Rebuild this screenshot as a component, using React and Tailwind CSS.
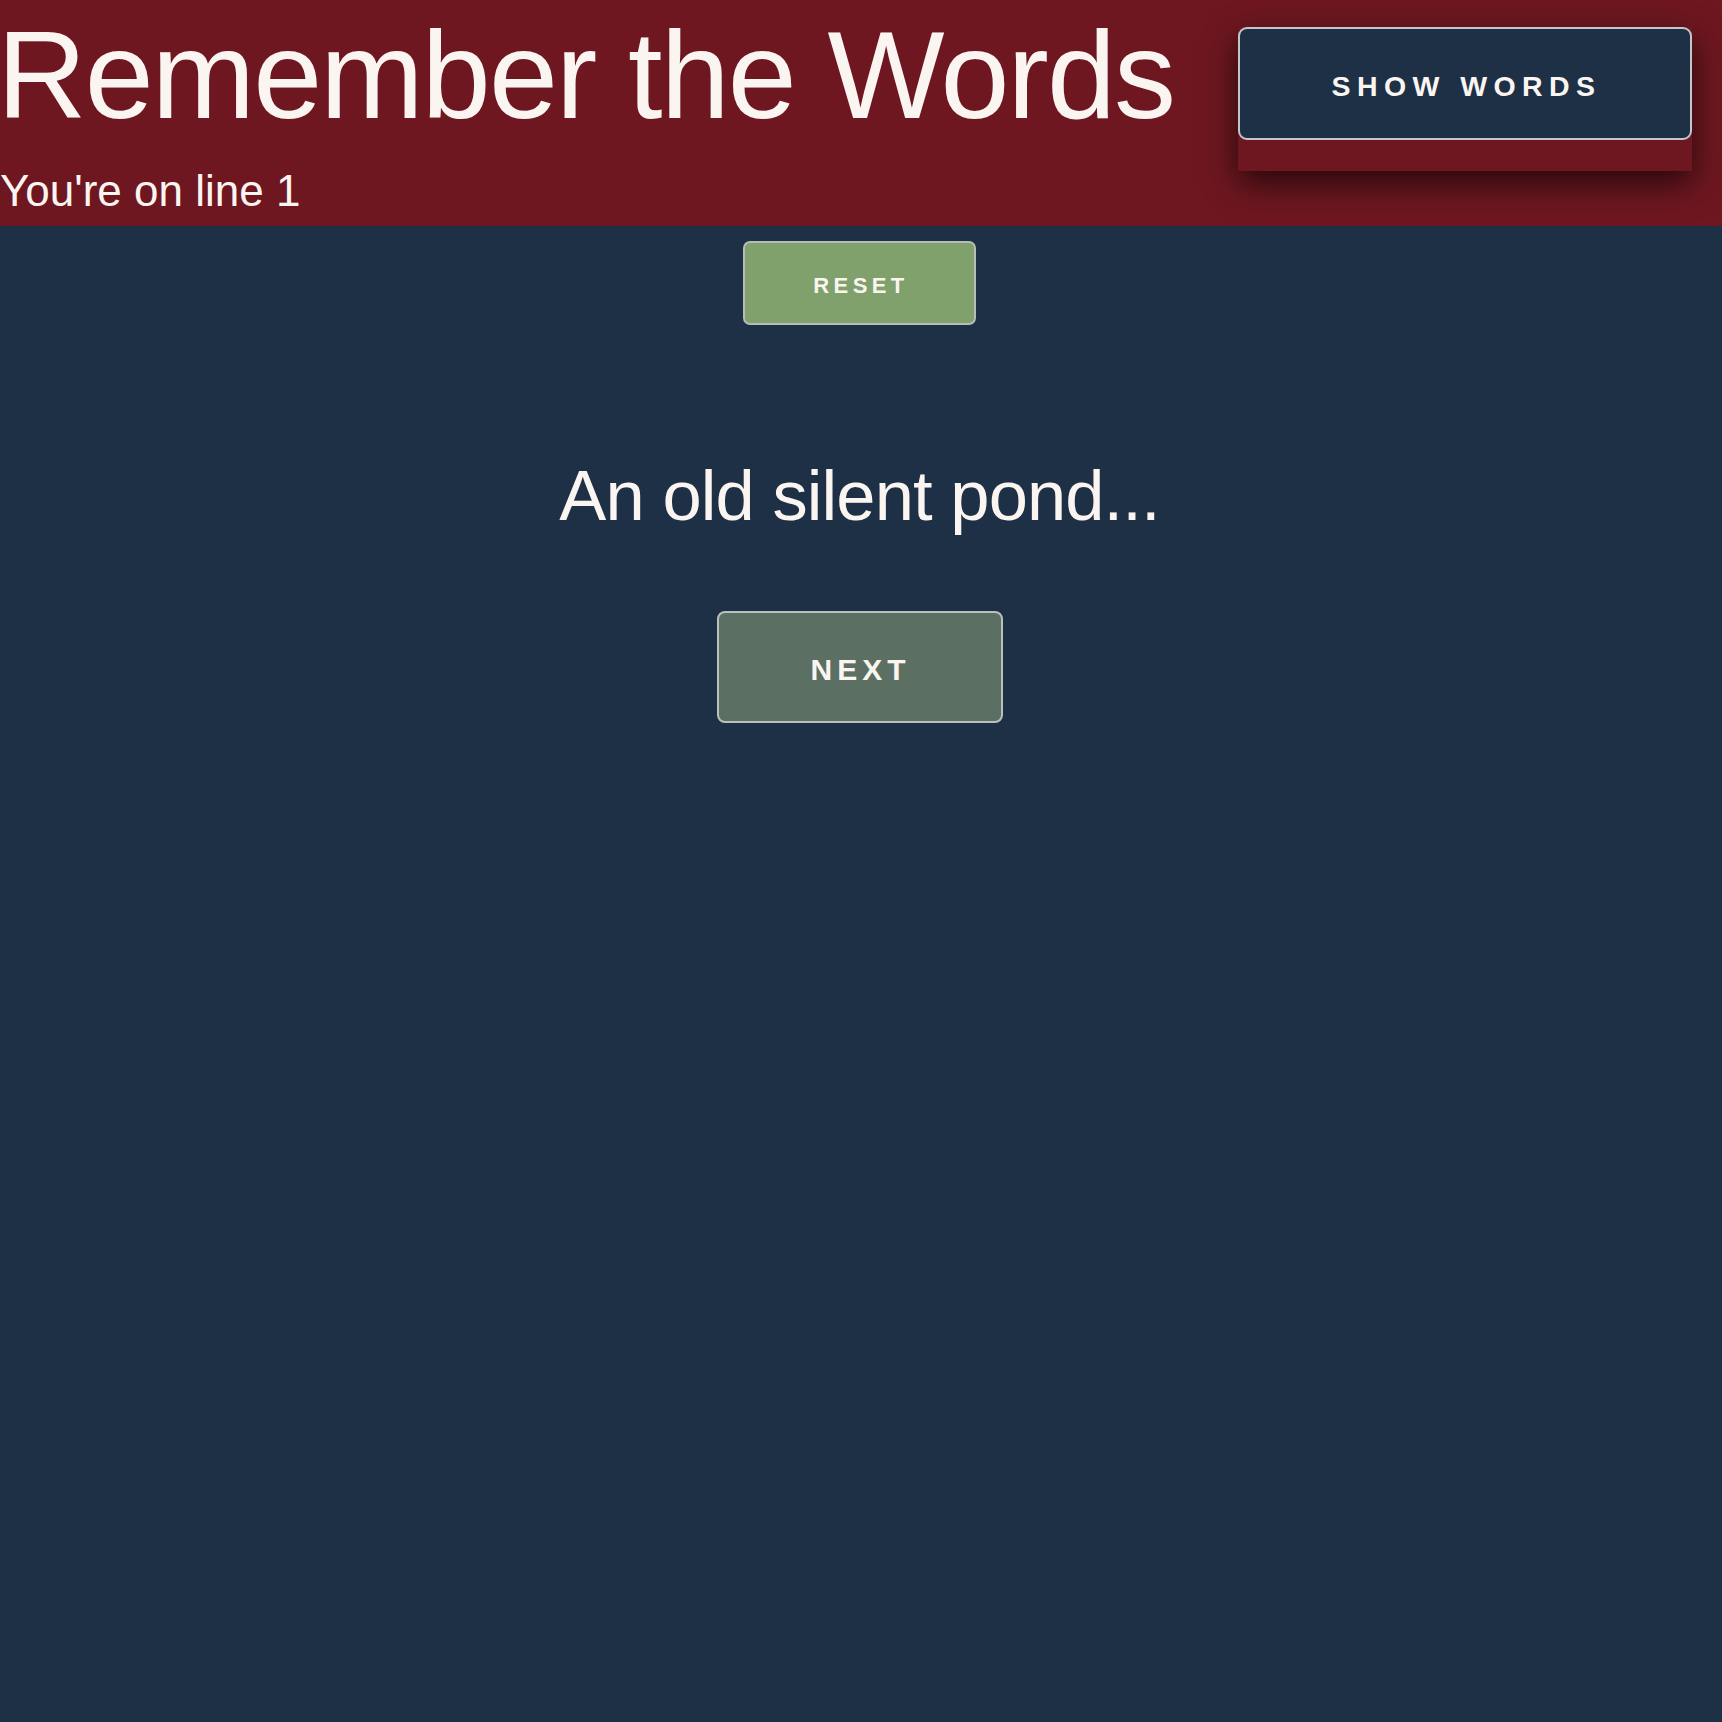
export default function App() {
  return (
    <div className="min-h-screen bg-[#1d3045] font-['Liberation_Sans',Arial,sans-serif] text-[#fbf5f2]">
      <header className="flex h-[226px] items-start justify-between bg-[#6e1720]">
        <div className="flex flex-col pt-[6px]">
          <h1 className="-ml-[3px] m-0 whitespace-nowrap text-[124px] font-normal leading-[139px] tracking-[-1.85px]">
            Remember the Words
          </h1>
          <p className="mt-[21px] whitespace-nowrap text-[44px] leading-[49px]">You're on line 1</p>
        </div>
        <div className="mr-[30px] mt-[27px] w-[454px] bg-[#6e1720] pb-[31px] shadow-[0_12px_30px_rgba(0,0,0,0.65)]">
          <button className="flex h-[113px] w-full items-center justify-center rounded-[9px] border-2 border-[#c4c6c8] bg-[#1d3045] pl-[3px] pt-[5px] text-[28.5px] font-bold uppercase tracking-[6.4px] text-[#fbf5f2]">
            Show Words
          </button>
        </div>
      </header>
      <main className="flex flex-col items-center pr-[3px]">
        <button className="mt-[15px] flex h-[84px] w-[233px] items-center justify-center rounded-[7px] border-2 border-[#b8bcb8] bg-[#80a06c] pl-[3px] pt-[4px] text-[22px] font-bold uppercase tracking-[0.2em] text-[#fbf5f2]">
          Reset
        </button>
        <p className="mt-[131px] whitespace-nowrap text-[70.5px] leading-[79px] tracking-[-0.9px]">An old silent pond...</p>
        <button className="mt-[76px] flex h-[112px] w-[286px] items-center justify-center rounded-[8px] border-2 border-[#bcc0bc] bg-[#5b7062] pl-[2px] pt-[4px] text-[30px] font-bold uppercase tracking-[5px] text-[#fbf5f2]">
          Next
        </button>
      </main>
    </div>
  );
}
